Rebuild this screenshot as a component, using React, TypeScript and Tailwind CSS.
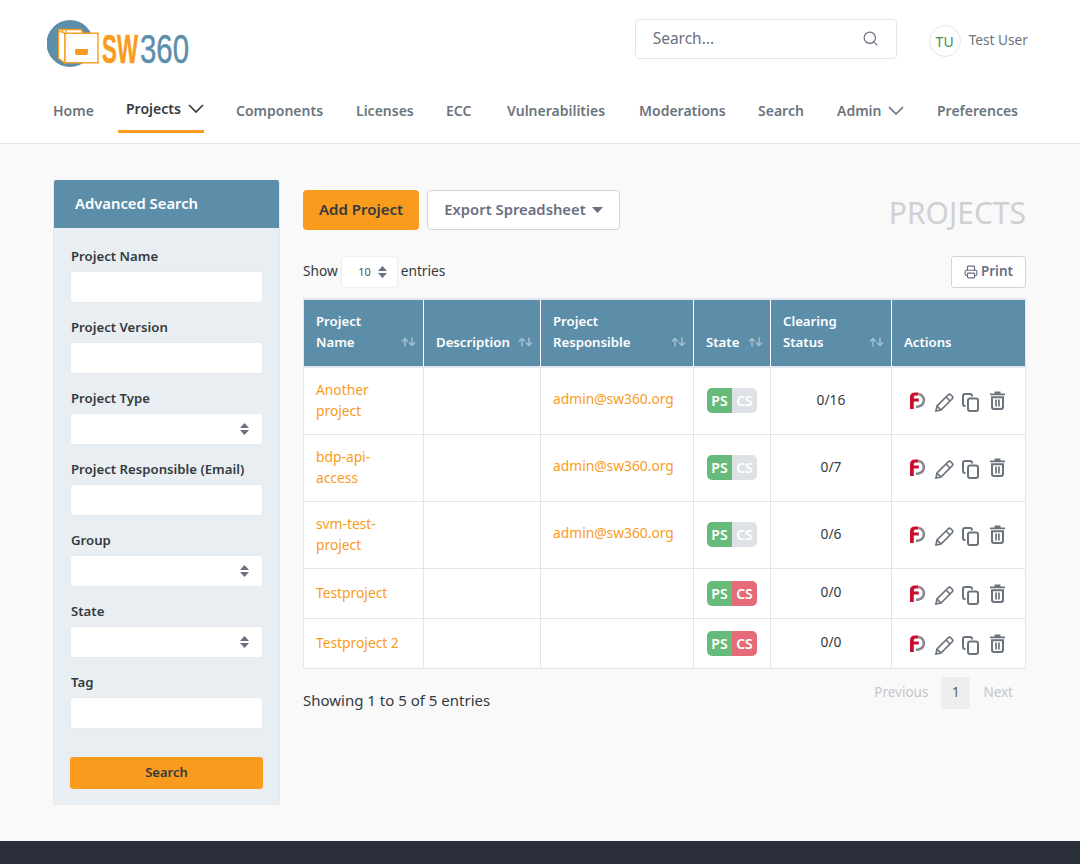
import { Printer, Search } from "lucide-react"

const fontStack = "font-['Noto_Sans',sans-serif]"

type Project = {
    name: string[]
    responsible: string
    clearing: string
    cleared: boolean
    rowClass: string
}

const projects: Project[] = [
    { name: ["Another", "project"], responsible: "admin@sw360.org", clearing: "0/16", cleared: true, rowClass: "h-[67px]" },
    { name: ["bdp-api-", "access"], responsible: "admin@sw360.org", clearing: "0/7", cleared: true, rowClass: "h-[67px]" },
    { name: ["svm-test-", "project"], responsible: "admin@sw360.org", clearing: "0/6", cleared: true, rowClass: "h-[67px]" },
    { name: ["Testproject"], responsible: "", clearing: "0/0", cleared: false, rowClass: "h-[50px]" },
    { name: ["Testproject 2"], responsible: "", clearing: "0/0", cleared: false, rowClass: "h-[50px]" },
]

const navItems = [
    { label: "Home", className: "w-[73px]" },
    { label: "Projects", className: "w-[110px]", active: true },
    { label: "Components", className: "w-[120px]" },
    { label: "Licenses", className: "w-[90px]" },
    { label: "ECC", className: "w-[61px]" },
    { label: "Vulnerabilities", className: "w-[132px]" },
    { label: "Moderations", className: "w-[119px]" },
    { label: "Search", className: "w-[79px]" },
    { label: "Admin", className: "w-[100px]", menu: true },
    { label: "Preferences", className: "w-[90px]" },
]

const Logo = () => (
    <svg width="144" height="50" viewBox="0 0 144 50" className="block">
        <circle cx="23" cy="23.5" r="23.5" fill="#5d8ea9" />
        <path d="M12 13 V9.5 H33 Q35 9.5 36 13" fill="#fff" stroke="#f99b1c" strokeWidth="1.4" />
        <path d="M15.5 13 V9.5 M19 13 V9.5" stroke="#f99b1c" strokeWidth="1.2" />
        <path d="M11.5 11 L18 13.5 V43 L11.5 38.5 Z" fill="#fff" stroke="#f99b1c" strokeWidth="1.2" />
        <rect x="18" y="13.2" width="33" height="29.6" fill="#fff" stroke="#f99b1c" strokeWidth="1.4" />
        <path d="M28 29 H41 V33 Q41 35 39 35 H30 Q28 35 28 33 Z" fill="#f99b1c" />
        <text x="55" y="43" fontFamily="Liberation Sans" fontWeight="700" fontSize="41" fill="#f99b1c" stroke="#f99b1c" strokeWidth=".5" textLength="36" lengthAdjust="spacingAndGlyphs">SW</text>
        <text x="93" y="43" fontFamily="Liberation Sans" fontSize="41" fill="#5d8ea9" stroke="#5d8ea9" strokeWidth=".5" textLength="49" lengthAdjust="spacingAndGlyphs">360</text>
    </svg>
)

const NavChevron = ({ className }: { className: string }) => (
    <svg width="16" height="9" viewBox="0 0 16 9" fill="none" stroke="currentColor" strokeWidth="1.7" className={className}>
        <path d="M1 1 L8 8 L15 1" />
    </svg>
)

const SortIcon = () => (
    <svg width="15" height="10" viewBox="0 0 15 10" fill="none" stroke="#a3bfd0" strokeWidth="1.5" className="shrink-0">
        <path d="M4 9.5 V1.5 M1 4.5 L4 1.5 L7 4.5" />
        <path d="M11 .5 V8.5 M8 5.5 L11 8.5 L14 5.5" />
    </svg>
)

const SelectArrows = () => (
    <svg width="9" height="12" viewBox="0 0 9 12" fill="#6b6f82" className="shrink-0">
        <path d="M4.5 0 L9 5 H0 Z M0 7 H9 L4.5 12 Z" />
    </svg>
)

const ActionIcons = () => (
    <div className="flex items-center pl-[18px]">
        <svg width="17" height="17" viewBox="0 0 17 17" fill="none" className="mr-[8px]">
            <path d="M9 2 A6.3 6.3 0 1 1 6 14.5" stroke="#85888c" strokeWidth="2.6" />
            <path d="M0 17 V5 Q0 .5 5 .5 H8.5 V3.4 H5.6 Q3.8 3.4 3.8 5.2 V6.5 H8.8 V9.5 H3.8 V17 Z" fill="#c8102e" />
        </svg>
        <svg width="19" height="19" viewBox="0 0 19 19" fill="none" stroke="#6b737c" strokeWidth="1.7" className="mt-[4px] mr-[8px]">
            <path d="M1 18 L2 13 L13 2 Q14.5 .5 16 2 L17 3 Q18.5 4.5 17 6 L6 17 Z" />
            <path d="M11 4 L15 8 M2 13 L6 17" />
        </svg>
        <svg width="17" height="19" viewBox="0 0 17 19" fill="none" stroke="#6b737c" strokeWidth="2" className="mt-[4px] mr-[11px]">
            <rect x="6" y="5.5" width="10" height="12.5" rx="2" />
            <path d="M3.5 13 H3 Q1 13 1 11 V3 Q1 1 3 1 H8 Q10 1 10 3 V3.5" />
        </svg>
        <svg width="15" height="19" viewBox="0 0 15 19" fill="#6b737c">
            <path d="M0 2.5 H4.5 V.5 H10.5 V2.5 H15 V4.2 H0 Z" />
            <path fillRule="evenodd" d="M1 5.2 H14 V16 Q14 19 11 19 H4 Q1 19 1 16 Z M3 7.2 V15.5 Q3 17 4.5 17 H10.5 Q12 17 12 15.5 V7.2 Z" />
            <path d="M5.2 8.5 H6.9 V15.5 H5.2 Z M8.1 8.5 H9.8 V15.5 H8.1 Z" />
        </svg>
    </div>
)

const StateBadge = ({ cleared }: { cleared: boolean }) => (
    <div className="flex h-[25px] w-[50px] overflow-hidden rounded-[5px] text-[14px] leading-[25px] font-semibold text-white">
        <span className="w-[25px] bg-[#66bb7a] text-center">PS</span>
        <span className={cleared ? "w-[25px] bg-[#dee2e6] text-center" : "w-[25px] bg-[#e56b78] text-center"}>CS</span>
    </div>
)

const Field = ({ label, select }: { label: string; select?: boolean }) => (
    <div className="flex flex-col">
        <label className="mb-[4px] pl-px text-[13.2px] leading-[21px] font-semibold text-[#343a40]">{label}</label>
        <div className="flex h-[32px] items-center justify-end rounded-[3px] border border-[#e6e9ee] bg-white pr-[13px]">
            {select && <SelectArrows />}
        </div>
    </div>
)

const HeaderCell = ({ lines, width, sort = true }: { lines: string[]; width: string; sort?: boolean }) => (
    <th className={`${width} border-x border-white bg-[#5d8ea9] pt-[11px] pr-[7px] pb-[13px] pl-[12px] align-bottom text-left text-[13.2px] leading-[21px] font-semibold text-white first:border-l-[#e4e6ef] last:border-r-[#e4e6ef]`}>
        <div className="flex items-end justify-between">
            <div>
                {lines.map((line) => (
                    <div key={line}>{line}</div>
                ))}
            </div>
            {sort && (
                <div className="pb-[6px]">
                    <SortIcon />
                </div>
            )}
        </div>
    </th>
)

export default function App() {
    return (
        <div className={`${fontStack} flex h-[864px] flex-col overflow-hidden bg-[#f9f9f9] text-[#212529]`}>
            <header className="h-[144px] shrink-0 border-b border-[#e4e4e4] bg-white">
                <div className="flex h-[88px] items-start justify-between pr-[52px] pl-[47px]">
                    <div className="pt-[20px]">
                        <Logo />
                    </div>
                    <div className="flex items-start pt-[19px]">
                        <div className="flex h-[40px] w-[262px] items-center justify-between rounded-[4px] border border-[#e6e6ea] pr-[17px] pl-[17px]">
                            <span className="text-[15.5px] text-[#6e7180]">Search...</span>
                            <Search size={17} strokeWidth={1.7} className="-mt-[2px] text-[#6e7180]" />
                        </div>
                        <div className="mt-[6px] ml-[32px] flex size-[32px] items-center justify-center rounded-full border border-[#e4e6e8] text-[14px] text-[#3f8f4f]">TU</div>
                        <span className="mt-[11px] ml-[8px] text-[13.7px] leading-[20px] text-[#6c757d]">Test User</span>
                    </div>
                </div>
                <nav className="flex h-[45px] items-start pl-[53px] text-[14px] font-semibold text-[#6c757d]">
                    {navItems.map((item) => (
                        <div key={item.label} className={`${item.className} relative shrink-0 whitespace-nowrap`}>
                            {item.active ? (
                                <>
                                    <div className="flex h-[40px] items-start pt-[10px] text-[#343a40]">
                                        Projects
                                        <NavChevron className="mt-[6px] ml-[7px]" />
                                    </div>
                                    <div className="absolute top-[42px] -left-[8px] h-[3px] w-[86px] bg-[#f99b1c]" />
                                </>
                            ) : (
                                <div className="flex items-center pt-[12px]">
                                    {item.label}
                                    {item.menu && <NavChevron className="ml-[6px]" />}
                                </div>
                            )}
                        </div>
                    ))}
                </nav>
            </header>

            <main className="flex h-[697px] shrink-0 pt-[36px] pr-[54px] pl-[53px]">
                <aside className="h-[625px] w-[227px] shrink-0 overflow-hidden rounded-t-[3px] border-x border-[#e4e8ec] bg-[#e9eef2]">
                    <div className="-mx-px flex h-[48px] items-center bg-[#5d8ea9] pb-[2px] pl-[22px] text-[14.8px] font-semibold text-white">Advanced Search</div>
                    <div className="flex flex-col gap-[14px] px-[16px] pt-[18px]">
                        <Field label="Project Name" />
                        <Field label="Project Version" />
                        <Field label="Project Type" select />
                        <Field label="Project Responsible (Email)" />
                        <Field label="Group" select />
                        <Field label="State" select />
                        <Field label="Tag" />
                    </div>
                    <div className="mx-[16px] mt-[28px] h-[32px] rounded-[3px] bg-[#f99b1c] text-center text-[13px] leading-[31px] font-semibold text-[#343a40]">Search</div>
                </aside>

                <section className="ml-[23px] w-[723px] shrink-0">
                    <div className="flex items-start justify-between pt-[10px]">
                        <div className="flex gap-[8px]">
                            <div className="flex h-[40px] w-[116px] items-center justify-center rounded-[4px] bg-[#f99b1c] pb-[2px] text-[15px] font-semibold text-[#343a40]">Add Project</div>
                            <div className="flex h-[40px] w-[193px] items-center justify-center rounded-[4px] border border-[#d3d3e0] bg-white pb-[2px] text-[14.8px] font-semibold text-[#6b6f82]">
                                Export Spreadsheet
                                <svg width="11" height="6" viewBox="0 0 11 6" fill="#6b6f82" className="mt-[2px] ml-[6px]">
                                    <path d="M0 0 H11 L5.5 6 Z" />
                                </svg>
                            </div>
                        </div>
                        <h1 className="pt-[5px] text-[30px] leading-[36px] text-[#d0d0d4]">PROJECTS</h1>
                    </div>

                    <div className="mt-[25px] flex h-[32px] items-center justify-between">
                        <div className="flex items-center text-[13.7px] text-[#343a40]">
                            <span className="pb-[2px]">Show</span>
                            <div className="mx-[3px] flex h-[32px] w-[57px] items-center justify-end gap-[7px] rounded-[5px] border border-[#eceef2] bg-white pr-[10px] text-[11px] text-[#495057]">
                                10
                                <SelectArrows />
                            </div>
                            <span className="pb-[2px]">entries</span>
                        </div>
                        <div className="flex h-[32px] w-[75px] items-center justify-center gap-[3px] rounded-[3px] border border-[#d3d3e0] bg-white pb-[1px] text-[13.5px] font-semibold text-[#6b6f82]">
                            <Printer size={14} />
                            Print
                        </div>
                    </div>

                    <table className="mt-[10px] w-[722px] table-fixed border-collapse text-[13.8px]">
                        <thead className="border-y-2 border-[#e4e6ef]">
                            <tr className="h-[67px]">
                                <HeaderCell lines={["Project", "Name"]} width="w-[120px]" />
                                <HeaderCell lines={["Description"]} width="w-[117px]" />
                                <HeaderCell lines={["Project", "Responsible"]} width="w-[153px]" />
                                <HeaderCell lines={["State"]} width="w-[77px]" />
                                <HeaderCell lines={["Clearing", "Status"]} width="w-[121px]" />
                                <HeaderCell lines={["Actions"]} width="w-[134px]" sort={false} />
                            </tr>
                        </thead>
                        <tbody className="bg-white">
                            {projects.map((project) => (
                                <tr key={project.name.join("")} className={`${project.rowClass} border-b border-[#e4e6ef]`}>
                                    <td className="border-x border-[#e4e6ef] px-[12px] pb-[2px] leading-[21px] text-[#f99b1c]">
                                        {project.name.map((line) => (
                                            <div key={line}>{line}</div>
                                        ))}
                                    </td>
                                    <td className="border-x border-[#e4e6ef]" />
                                    <td className="border-x border-[#e4e6ef] px-[12px] pb-[2px] text-[#f99b1c]">{project.responsible}</td>
                                    <td className="border-x border-[#e4e6ef] px-[13px]">
                                        <StateBadge cleared={project.cleared} />
                                    </td>
                                    <td className="border-x border-[#e4e6ef] pb-[1px] text-center text-[#343a40]">{project.clearing}</td>
                                    <td className="border-x border-[#e4e6ef]">
                                        <ActionIcons />
                                    </td>
                                </tr>
                            ))}
                        </tbody>
                    </table>

                    <div className="mt-[8px] flex items-start justify-between">
                        <div className="pt-[12px] text-[15px] text-[#343a40]">Showing 1 to 5 of 5 entries</div>
                        <div className="flex items-center pr-[13px] text-[13.5px] text-[#c4c6cc]">
                            Previous
                            <span className="mx-[13px] flex h-[32px] w-[29px] items-center justify-center rounded-[3px] bg-[#eeeeee] text-[#5a5f66]">1</span>
                            Next
                        </div>
                    </div>
                </section>
            </main>

            <footer className="flex-1 bg-[#2b2f3b]" />
        </div>
    )
}
